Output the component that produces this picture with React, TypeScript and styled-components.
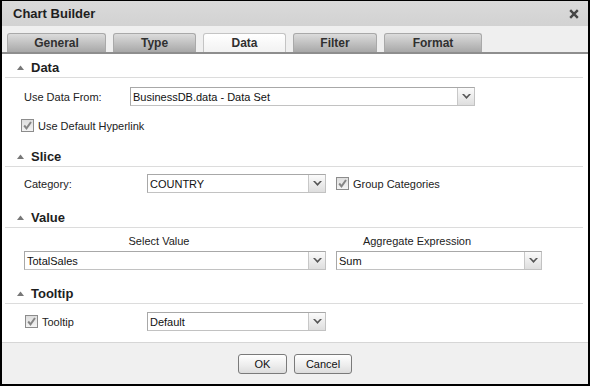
import React from "react";
import styled, { createGlobalStyle } from "styled-components";

const Global = createGlobalStyle`
  html, body { margin: 0; padding: 0; background: #fff; }
  body { font-family: "Liberation Sans", Arial, sans-serif; }
  * { box-sizing: border-box; }
`;

const Dialog = styled.div`
  width: 590px;
  height: 386px;
  border: 2px solid #000;
  border-top-width: 1px;
  display: flex;
  flex-direction: column;
  background: #fff;
  overflow: hidden;
`;

const TitleBar = styled.div`
  height: 25px;
  flex: none;
  display: flex;
  align-items: center;
  justify-content: space-between;
  padding: 0 9px 0 11px;
  background: linear-gradient(#dadada, #d2d2d2);
`;

const Title = styled.div`
  font: bold 13px "Liberation Sans", Arial, sans-serif;
  color: #1e1e1e;
`;

const Close = styled.button`
  border: 0;
  background: none;
  padding: 0;
  width: 10px;
  height: 10px;
  display: flex;
  cursor: pointer;
`;

const TabStrip = styled.div`
  height: 28px;
  flex: none;
  display: flex;
  align-items: flex-end;
  gap: 7px;
  padding-left: 5px;
  background: #efefef;
  border-bottom: 2px solid #8e8e8e;
`;

const Tab = styled.div<{ $w: number; $active?: boolean }>`
  width: ${(p) => p.$w}px;
  height: 19px;
  display: flex;
  align-items: center;
  justify-content: center;
  border: 1px solid ${(p) => (p.$active ? "#c4c4c4" : "#a9a9a9")};
  border-bottom: 0;
  border-radius: 3px 3px 0 0;
  background: ${(p) =>
    p.$active
      ? "linear-gradient(#ffffff, #f2f2f2)"
      : "linear-gradient(#dcdcdc, #c4c4c4 45%, #a8a8a8)"};
  font: bold 12px "Liberation Sans", Arial, sans-serif;
  color: #303030;
`;

const Content = styled.div`
  flex: 1;
  padding: 4px 5px 0 3px;
  display: flex;
  flex-direction: column;
`;

const SectionHeader = styled.div<{ $gap: number }>`
  height: 20px;
  margin-top: ${(p) => p.$gap}px;
  display: flex;
  align-items: center;
  gap: 7px;
  padding-left: 12px;
  border-bottom: 1px solid #dcdcdc;
  font: bold 13px "Liberation Sans", Arial, sans-serif;
  color: #1e1e1e;
`;

const Row = styled.div<{ $top: number; $left?: number }>`
  display: flex;
  align-items: center;
  margin-top: ${(p) => p.$top}px;
  padding-left: ${(p) => p.$left ?? 19}px;
  font-size: 11px;
  color: #222;
`;

const Label = styled.div<{ $w: number }>`
  width: ${(p) => p.$w}px;
  flex: none;
`;

const Spacer = styled.div<{ $w: number }>`
  width: ${(p) => p.$w}px;
  flex: none;
`;

const SelectBox = styled.div<{ $w: number }>`
  width: ${(p) => p.$w}px;
  height: 19px;
  flex: none;
  display: flex;
  border: 1px solid #c2c2c2;
  border-top-color: #a8a8a8;
  border-left-color: #a8a8a8;
  background: #fff;
`;

const SelectText = styled.div`
  flex: 1;
  padding-left: 2px;
  display: flex;
  align-items: center;
  font-size: 11px;
  color: #111;
  white-space: nowrap;
  overflow: hidden;
`;

const DropButton = styled.div`
  width: 17px;
  flex: none;
  display: flex;
  align-items: center;
  justify-content: center;
  border-left: 1px solid #c8c8c8;
  background: linear-gradient(#fbfbfb, #dedede);
`;

const CheckWrap = styled.label<{ $ml?: number }>`
  display: flex;
  align-items: center;
  gap: 4px;
  margin-left: ${(p) => p.$ml ?? 0}px;
  font-size: 11px;
  color: #222;
`;

const Box = styled.span`
  width: 13px;
  height: 13px;
  flex: none;
  display: flex;
  border: 1px solid #8c8c8c;
  background: linear-gradient(#dedede, #f4f4f4);
`;

const ColLabels = styled.div`
  display: grid;
  grid-template-columns: 302px 206px;
  column-gap: 10px;
  margin-top: 7px;
  padding-left: 19px;
  font-size: 11px;
  color: #222;
`;

const ColLabel = styled.div<{ $pr: number }>`
  text-align: center;
  padding-right: ${(p) => p.$pr}px;
`;

const Footer = styled.div`
  height: 42px;
  flex: none;
  display: flex;
  align-items: center;
  justify-content: center;
  gap: 7px;
  padding-top: 1px;
  background: #f0f0f0;
  border-top: 1px solid #d6d6d6;
`;

const Button = styled.button<{ $w: number }>`
  width: ${(p) => p.$w}px;
  height: 20px;
  padding: 0;
  border: 1px solid #7a7a7a;
  border-radius: 3px;
  background: linear-gradient(#ffffff, #ececec 60%, #dcdcdc);
  font: 11px "Liberation Sans", Arial, sans-serif;
  color: #111;
`;

const Triangle = () => (
  <svg width="7" height="5" viewBox="0 0 7 5">
    <polygon points="0,5 3.5,0.5 7,5" fill="#777" />
  </svg>
);

const Chevron = () => (
  <svg width="9" height="5" viewBox="0 0 9 5">
    <polygon points="0,0 2,0 4.5,2.5 7,0 9,0 4.5,5" fill="#555" />
  </svg>
);

const Check = () => (
  <Box>
    <svg width="11" height="11" viewBox="0 0 11 11">
      <polyline
        points="2.2,5.5 4.5,8.3 9,2"
        fill="none"
        stroke="#858585"
        strokeWidth="2"
      />
    </svg>
  </Box>
);

const Select = ({ w, value }: { w: number; value: string }) => (
  <SelectBox $w={w}>
    <SelectText>{value}</SelectText>
    <DropButton>
      <Chevron />
    </DropButton>
  </SelectBox>
);

const Header = ({ gap, children }: { gap: number; children: React.ReactNode }) => (
  <SectionHeader $gap={gap}>
    <Triangle />
    <span>{children}</span>
  </SectionHeader>
);

export default function App() {
  return (
    <>
      <Global />
      <Dialog>
        <TitleBar>
          <Title>Chart Builder</Title>
          <Close aria-label="Close">
            <svg width="10" height="10" viewBox="0 0 10 10">
              <path d="M1.2 1.2 L8.8 8.8 M8.8 1.2 L1.2 8.8" stroke="#454545" strokeWidth="2.4" />
            </svg>
          </Close>
        </TitleBar>
        <TabStrip>
          <Tab $w={99}>General</Tab>
          <Tab $w={83}>Type</Tab>
          <Tab $w={83} $active>Data</Tab>
          <Tab $w={84}>Filter</Tab>
          <Tab $w={98}>Format</Tab>
        </TabStrip>
        <Content>
          <Header gap={0}>Data</Header>
          <Row $top={9}>
            <Label $w={106}>Use Data From:</Label>
            <Select w={345} value="BusinessDB.data - Data Set" />
          </Row>
          <Row $top={13} $left={16}>
            <CheckWrap>
              <Check />
              Use Default Hyperlink
            </CheckWrap>
          </Row>
          <Header gap={15}>Slice</Header>
          <Row $top={7}>
            <Label $w={123}>Category:</Label>
            <Select w={179} value="COUNTRY" />
            <CheckWrap $ml={10}>
              <Check />
              Group Categories
            </CheckWrap>
          </Row>
          <Header gap={15}>Value</Header>
          <ColLabels>
            <ColLabel $pr={32}>Select Value</ColLabel>
            <ColLabel $pr={44}>Aggregate Expression</ColLabel>
          </ColLabels>
          <Row $top={4}>
            <Select w={302} value="TotalSales" />
            <Spacer $w={10} />
            <Select w={206} value="Sum" />
          </Row>
          <Header gap={14}>Tooltip</Header>
          <Row $top={8} $left={20}>
            <Label $w={122}>
              <CheckWrap>
                <Check />
                Tooltip
              </CheckWrap>
            </Label>
            <Select w={179} value="Default" />
          </Row>
        </Content>
        <Footer>
          <Button $w={49}>OK</Button>
          <Button $w={58}>Cancel</Button>
        </Footer>
      </Dialog>
    </>
  );
}
